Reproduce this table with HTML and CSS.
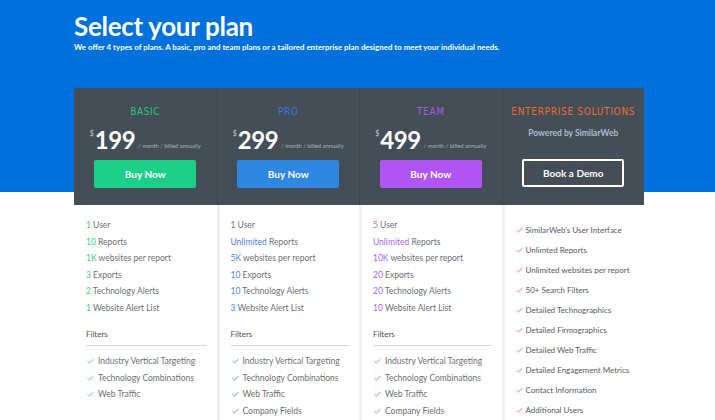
FILE: index.html
```html
<!DOCTYPE html>
<html>
<head>
<meta charset="utf-8">
<link rel="stylesheet" href="styles.css">
</head>
<body>
<div class="page">
  <h1 class="title">Select your plan</h1>
  <p class="subtitle">We offer 4 types of plans. A basic, pro and team plans or a tailored enterprise plan designed to meet your individual needs.</p>

  <div class="plans">
    <div class="plan basic">
      <div class="head">
        <div class="name">BASIC</div>
        <div class="price"><span class="cur">$</span><span class="amount">199</span><span class="per">/ month / billed annually</span></div>
        <a class="btn">Buy Now</a>
      </div>
      <div class="body">
        <ul class="features">
          <li><b>1</b> User</li>
          <li><b>10</b> Reports</li>
          <li><b>1K</b> websites per report</li>
          <li><b>3</b> Exports</li>
          <li><b>2</b> Technology Alerts</li>
          <li><b>1</b> Website Alert List</li>
        </ul>
        <div class="filters">Filters</div>
        <ul class="checks">
          <li><svg viewBox="0 0 8 6"><polyline points="0.6,3.2 2.8,5.2 7.4,0.8"/></svg>Industry Vertical Targeting</li>
          <li><svg viewBox="0 0 8 6"><polyline points="0.6,3.2 2.8,5.2 7.4,0.8"/></svg>Technology Combinations</li>
          <li><svg viewBox="0 0 8 6"><polyline points="0.6,3.2 2.8,5.2 7.4,0.8"/></svg>Web Traffic</li>
        </ul>
      </div>
    </div>

    <div class="plan pro">
      <div class="head">
        <div class="name">PRO</div>
        <div class="price"><span class="cur">$</span><span class="amount">299</span><span class="per">/ month / billed annually</span></div>
        <a class="btn">Buy Now</a>
      </div>
      <div class="body">
        <ul class="features">
          <li>1 User</li>
          <li><b>Unlimited</b> Reports</li>
          <li><b>5K</b> websites per report</li>
          <li><b>10</b> Exports</li>
          <li><b>10</b> Technology Alerts</li>
          <li><b>3</b> Website Alert List</li>
        </ul>
        <div class="filters">Filters</div>
        <ul class="checks">
          <li><svg viewBox="0 0 8 6"><polyline points="0.6,3.2 2.8,5.2 7.4,0.8"/></svg>Industry Vertical Targeting</li>
          <li><svg viewBox="0 0 8 6"><polyline points="0.6,3.2 2.8,5.2 7.4,0.8"/></svg>Technology Combinations</li>
          <li><svg viewBox="0 0 8 6"><polyline points="0.6,3.2 2.8,5.2 7.4,0.8"/></svg>Web Traffic</li>
          <li><svg viewBox="0 0 8 6"><polyline points="0.6,3.2 2.8,5.2 7.4,0.8"/></svg>Company Fields</li>
        </ul>
      </div>
    </div>

    <div class="plan team">
      <div class="head">
        <div class="name">TEAM</div>
        <div class="price"><span class="cur">$</span><span class="amount">499</span><span class="per">/ month / billed annually</span></div>
        <a class="btn">Buy Now</a>
      </div>
      <div class="body">
        <ul class="features">
          <li><b>5</b> User</li>
          <li><b>Unlimited</b> Reports</li>
          <li><b>10K</b> websites per report</li>
          <li><b>20</b> Exports</li>
          <li><b>20</b> Technology Alerts</li>
          <li><b>10</b> Website Alert List</li>
        </ul>
        <div class="filters">Filters</div>
        <ul class="checks">
          <li><svg viewBox="0 0 8 6"><polyline points="0.6,3.2 2.8,5.2 7.4,0.8"/></svg>Industry Vertical Targeting</li>
          <li><svg viewBox="0 0 8 6"><polyline points="0.6,3.2 2.8,5.2 7.4,0.8"/></svg>Technology Combinations</li>
          <li><svg viewBox="0 0 8 6"><polyline points="0.6,3.2 2.8,5.2 7.4,0.8"/></svg>Web Traffic</li>
          <li><svg viewBox="0 0 8 6"><polyline points="0.6,3.2 2.8,5.2 7.4,0.8"/></svg>Company Fields</li>
        </ul>
      </div>
    </div>

    <div class="plan enterprise">
      <div class="head">
        <div class="name">ENTERPRISE SOLUTIONS</div>
        <div class="powered">Powered by SimilarWeb</div>
        <a class="btn outline">Book a Demo</a>
      </div>
      <div class="body">
        <ul class="checks ent">
          <li><svg viewBox="0 0 8 6"><polyline points="0.6,3.2 2.8,5.2 7.4,0.8"/></svg>SimilarWeb's User Interface</li>
          <li><svg viewBox="0 0 8 6"><polyline points="0.6,3.2 2.8,5.2 7.4,0.8"/></svg>Unlimted Reports</li>
          <li><svg viewBox="0 0 8 6"><polyline points="0.6,3.2 2.8,5.2 7.4,0.8"/></svg>Unlimited websites per report</li>
          <li><svg viewBox="0 0 8 6"><polyline points="0.6,3.2 2.8,5.2 7.4,0.8"/></svg>50+ Search Filters</li>
          <li><svg viewBox="0 0 8 6"><polyline points="0.6,3.2 2.8,5.2 7.4,0.8"/></svg>Detailed Technographics</li>
          <li><svg viewBox="0 0 8 6"><polyline points="0.6,3.2 2.8,5.2 7.4,0.8"/></svg>Detailed Firmographics</li>
          <li><svg viewBox="0 0 8 6"><polyline points="0.6,3.2 2.8,5.2 7.4,0.8"/></svg>Detailed Web Traffic</li>
          <li><svg viewBox="0 0 8 6"><polyline points="0.6,3.2 2.8,5.2 7.4,0.8"/></svg>Detailed Engagement Metrics</li>
          <li><svg viewBox="0 0 8 6"><polyline points="0.6,3.2 2.8,5.2 7.4,0.8"/></svg>Contact Information</li>
          <li><svg viewBox="0 0 8 6"><polyline points="0.6,3.2 2.8,5.2 7.4,0.8"/></svg>Additional Users</li>
        </ul>
      </div>
    </div>
  </div>
</div>
</body>
</html>
```

FILE: styles.css
```css
* { box-sizing: border-box; }
html, body { margin: 0; padding: 0; }
body {
  background: linear-gradient(#0071dc 0, #0071dc 192px, #ffffff 192px);
  font-family: Lato, "Open Sans", sans-serif;
  height: 420px;
  overflow: hidden;
}
.page {
  padding: 11px 71px 0 74px;
}
.title {
  margin: 0;
  color: #fff;
  font-size: 26px;
  line-height: 30px;
  font-weight: 700;
  letter-spacing: -0.3px;
}
.subtitle {
  margin: 1px 0 0;
  color: #fff;
  font-size: 7.9px;
  line-height: 10px;
  font-weight: 700;
}
.plans {
  margin-top: 36px;
  display: grid;
  grid-template-columns: repeat(4, 1fr);
}
.head {
  background: #434e56;
  height: 117px;
  padding-top: 17px;
  display: flex;
  flex-direction: column;
  align-items: center;
}
.plan + .plan .head { border-left: 1px solid #3b454c; }
.name {
  font-family: "Liberation Sans Narrow", "DejaVu Sans Condensed", sans-serif;
  font-stretch: condensed;
  font-size: 10px;
  line-height: 13px;
  letter-spacing: 0.6px;
  font-weight: 400;
  white-space: nowrap;
}
.basic .name { color: #2cc47f; }
.pro .name { color: #3f73e0; }
.team .name { color: #a45ae6; }
.enterprise .name { color: #ef6a2c; letter-spacing: 0.7px; }
.price {
  display: flex;
  align-items: flex-end;
  margin-top: 10px;
  height: 24px;
  color: #fff;
}
.cur {
  font-size: 7px;
  color: #c7cdd2;
  align-self: flex-start;
  margin-top: 1px;
  margin-right: 1px;
}
.amount {
  font-size: 24px;
  line-height: 24px;
  font-weight: 700;
  letter-spacing: -0.5px;
}
.per {
  font-size: 5.8px;
  color: #aab2b8;
  margin-left: 3px;
  margin-bottom: 3px;
}
.btn {
  display: flex;
  align-items: center;
  justify-content: center;
  width: 102px;
  height: 28px;
  margin-top: 8px;
  border-radius: 2px;
  color: #fff;
  font-size: 10px;
  font-weight: 700;
}
.basic .btn { background: #1ccf88; }
.pro .btn { background: #2e88e2; }
.team .btn { background: #b055f4; }
.btn.outline {
  border: 2px solid #fff;
  background: transparent;
  margin-top: 20px;
}
.powered {
  margin-top: 9px;
  font-size: 8.5px;
  line-height: 12px;
  font-weight: 700;
  color: #a9bccf;
}
.body {
  padding: 12px 8px 0 12px;
  height: 215px;
}
.plan + .plan .body {
  border-left: 3px solid #f0f0f0;
  padding-left: 11px;
}
ul { list-style: none; margin: 0; padding: 0; }
.features li {
  font-size: 8.5px;
  line-height: 16.5px;
  color: #6b6f73;
  white-space: nowrap;
}
.features b { font-weight: 400; }
.basic .features b { color: #33cf8a; }
.pro .features b { color: #4b7fe2; }
.team .features b { color: #a864ee; }
.filters {
  margin-top: 10px;
  font-size: 8px;
  line-height: 16px;
  color: #4b4f53;
  padding-bottom: 3px;
  border-bottom: 1px solid #d2d7db;
  margin-right: 2px;
}
.checks { margin-top: 7px; }
.checks li {
  display: flex;
  align-items: center;
  font-size: 8.5px;
  line-height: 16.5px;
  color: #6b6f73;
  white-space: nowrap;
}
.checks svg {
  width: 7px;
  height: 6px;
  margin: 0 4px 0 1px;
  fill: none;
  stroke-width: 1;
  flex: none;
}
.basic .checks svg { stroke: #33cf8a; }
.pro .checks svg { stroke: #4b7fe2; }
.team .checks svg { stroke: #a864ee; }
.plan.enterprise .body { padding-left: 10px; }
.checks.ent { margin-top: 3px; }
.checks.ent li { line-height: 20px; font-size: 8px; color: #55595d; }
.checks.ent svg { stroke: #ef6a2c; margin-right: 3px; }
```
